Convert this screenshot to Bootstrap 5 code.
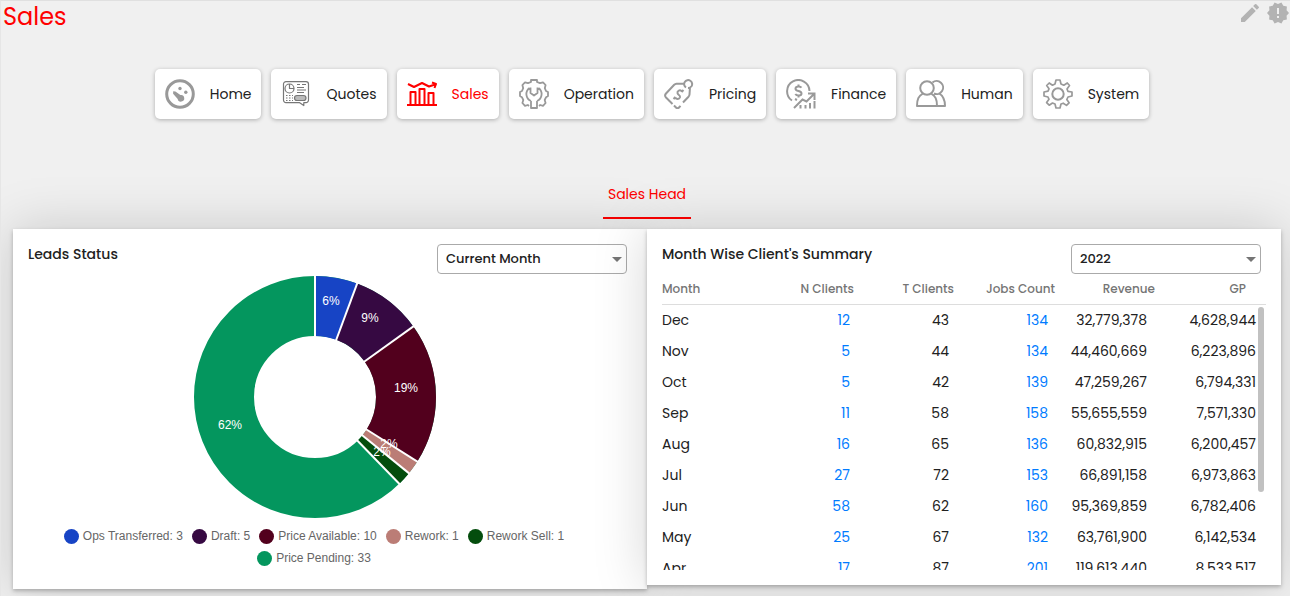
<!DOCTYPE html>
<html lang="en">
<head>
<meta charset="utf-8">
<meta name="viewport" content="width=device-width, initial-scale=1">
<title>Sales</title>
<link href="https://cdn.jsdelivr.net/npm/bootstrap@5.3.0/dist/css/bootstrap.min.css" rel="stylesheet">
<style>
body{background:#f0f0f0;color:#212121;font-family:Poppins,Inter,sans-serif;font-size:14px;line-height:20px;border-top:1px solid #e0e0e0;border-left:1px solid #e6e6e6}
h1{font-size:24px;line-height:32px;color:red;padding-left:2px}
.tool{border:0;background:none;padding:0;color:#b3b3b3;line-height:0}
.tool svg{width:24px;height:24px;fill:currentColor}
.main-nav{padding:36px 0 0 13px;gap:10px}
.tile{height:50px;padding:0 10px;gap:15px;border-radius:5px;background:#fff;color:#212121;box-shadow:0 1px 4px rgba(0,0,0,.28);text-decoration:none}
.tile svg{width:30px;height:30px;fill:none;stroke:#999;stroke-width:2;stroke-linejoin:round}
.tile .solid{fill:#999;stroke:none}
.tile.active{color:red}
.tile.active svg{stroke:red}
.sub-tabs{padding:51px 0 10px 3px}
.sub-tab{width:88px;height:49px;color:red;border-bottom:2px solid red;text-decoration:none}
.panels{padding:0 9px 7px 12px}
.panel{background:#fff;padding:15px 20px 15px 15px;box-shadow:0 2px 4px rgba(0,0,0,.25),0 0 50px rgba(0,0,0,.17)}
.panel h2{font-size:14px;line-height:20px;font-weight:500}
.pick{width:190px;height:30px;border:1px solid #aaa;border-radius:4px;padding:0 24px 0 8px;font-size:13px;font-weight:500;color:#212121;background-image:url("data:image/svg+xml,%3Csvg xmlns='http://www.w3.org/2000/svg' viewBox='0 0 10 5'%3E%3Cpath fill='%23757575' d='M0 0h10L5 5z'/%3E%3C/svg%3E");background-size:10px 5px;background-position:right 4px center}
.chart-box{padding:1px 25px 0 0}
.chart{width:244px;height:244px}
.chart circle{fill:none;stroke-width:60}
.chart line{stroke:#fff;stroke-width:2}
.chart text{fill:#fff;font:12px "Liberation Sans",Arial,sans-serif;text-anchor:middle}
.legend-list{font:12px/22px "Liberation Sans",Arial,sans-serif;color:#666;padding:6px 27px 0 0;column-gap:9px;margin-bottom:5px}
.legend-list svg{width:15px;height:15px;margin-right:4px}
.figures{display:block}
.figures thead,.figures tbody{display:block}
.figures tr{display:grid}
.figures th,.figures td{padding:0;text-align:right;white-space:nowrap}
.figures thead{border-bottom:1px solid #ddd;height:31px;padding-right:20px}
.figures thead tr{grid-template-columns:92fr 100fr 100fr 101fr 100fr 91fr;line-height:30px}
.figures thead th{font-weight:500;font-size:12px;color:#757575}
.figures tbody{height:265px;overflow-y:auto;scrollbar-width:none;padding-right:10px}
.figures tbody tr{grid-template-columns:89fr 99fr 99fr 99fr 99fr 109fr;line-height:31px}
.figures th:first-child{text-align:left}
.figures tbody th{font-weight:400}
.figures a{color:#007bff;text-decoration:none}
.figures tbody::-webkit-scrollbar{display:none}
.table-box{margin-right:-5px}
.thumb{top:33px;right:2px;width:6px;height:185px;border-radius:3px;background:#c1c1c1}
</style>
</head>
<body>
<header class="d-flex justify-content-between align-items-start">
  <h1 class="m-0 fw-normal">Sales</h1>
  <div class="d-flex gap-1">
    <button class="tool" type="button" aria-label="Edit"><svg viewBox="0 0 24 24"><path d="M3 17.25V21h3.75L17.81 9.94l-3.75-3.75L3 17.25zM20.71 7.04a1 1 0 0 0 0-1.41l-2.34-2.34a1 1 0 0 0-1.41 0l-1.83 1.83 3.75 3.75 1.83-1.83z"/></svg></button>
    <button class="tool" type="button" aria-label="New releases"><svg viewBox="0 0 24 24"><path d="M23 12l-2.44-2.78.34-3.68-3.61-.82-1.89-3.18L12 3 8.600 1.540 6.710 4.720l-3.610.810.340 3.680L1 12l2.440 2.780-.340 3.690 3.610.820 1.890 3.180L12 21l3.400 1.460 1.890-3.180 3.610-.820-.340-3.680L23 12zm-10 5h-2v-2h2v2zm0-4h-2V7h2v6z"/></svg></button>
  </div>
</header>

<nav class="main-nav d-flex flex-wrap justify-content-center" aria-label="Main">
  <a class="tile d-flex align-items-center" href="#"><svg viewBox="0 0 30 30"><circle cx="15" cy="15" r="13.300" stroke-width="3"/><g class="solid"><circle cx="15" cy="9.500" r="1.700"/><circle cx="20.800" cy="13.200" r="1.700"/><path d="M8.200 12.200l2.200.2 5 3.700a3.300 3.300 0 1 1-2.700 3.800l-4.600-5.200z"/></g></svg>Home</a>
  <a class="tile d-flex align-items-center" href="#"><svg viewBox="0 0 30 30"><g stroke="#777" stroke-width="1.200"><path d="M5 2.600h20a2.500 2.500 0 0 1 2.500 2.500v16a2.500 2.500 0 0 1-2.500 2.500h-2.200v3l-4.500-3H5a2.500 2.500 0 0 1-2.500-2.500v-16A2.500 2.500 0 0 1 5 2.600z"/><circle cx="8.500" cy="9.500" r="4.500"/><path d="M8.500 5v4.500H13"/><path d="M16 5.500h3m2 0h4M16 8.500h7M16 11h9M16 13.500h7"/><rect x="13.500" y="16.500" width="11.500" height="5" rx="2.500" fill="#bbb"/><path stroke-dasharray="1.500 1.500" d="M5 16.500h7M5 19h7M5 21.500h7"/></g></svg>Quotes</a>
  <a class="tile active d-flex align-items-center" href="#" aria-current="page"><svg viewBox="0 0 30 30"><path d="M0 26h30" stroke-width="2"/><path stroke-width="2" d="M3.500 26V13h5v13M12.500 26V10h5v16M21.500 26V14h5v12"/><path stroke-width="2" d="M1 5l6 3 8-4 7 3.500 6-2M25 3.500l4 1.500-1.500 4"/></svg>Sales</a>
  <a class="tile d-flex align-items-center" href="#"><svg viewBox="0 0 30 30"><path stroke-width="1.800" d="M10 27l-1.200-1-2.800.8L3.400 24l.9-3-1.400-2.800L1 17v-4l2-1 1.200-2.800L3.400 6 6 3.300l3 .9L12 3V1h6v2l3 1.200 3-.9L26.600 6l-.8 3.200L27 12l2 1v4l-1.900 1.200-1.400 2.800.9 3-2.600 2.800-2.800-.8-1.200 1"/><path stroke-width="1.800" d="M12 22V29h6V22M12 22a7.500 7.500 0 0 1-1.500-13M18 22a7.500 7.500 0 0 0 1.500-13M11.500 8.500V14l3.500 2.500 3.500-2.500V8.500"/></svg>Operation</a>
  <a class="tile d-flex align-items-center" href="#"><svg viewBox="0 0 30 30"><path d="M20.500 4.500l-8 .3a4 4 0 0 0-2.300 1L2 14.500a3 3 0 0 0 0 4L8.500 25M26 8l-.5 7.500a4 4 0 0 1-1 2.200L19 23.500M10 26.500l2 2a2 2 0 0 0 3 0l1.500-1.600M22 8.500a4 4 0 1 1 5.500-1.200A4 4 0 0 1 24 9"/><path d="M18 12.500c-2-2.500-5-.5-4.500 1.700.3 2 3 1.800 2.500 4-.8 2.500-4 2-4.500.2M9.500 20l2-2M17.500 13l2-2"/></svg>Pricing</a>
  <a class="tile d-flex align-items-center" href="#"><svg viewBox="0 0 30 30"><path d="M6 21.500A11.200 11.200 0 1 1 23.500 12M9 20l2 1"/><path d="M15.500 8.700c-1.500-2-6-1.500-6 1 0 3 6 1.600 6 4.700 0 2.600-4.700 2.800-6.200.6M12.500 5.500V8m0 8.500v2"/><path d="M8 29l8.500-8.500 4 2L28 15m-6-.5h6.500V21" stroke-linejoin="miter"/><path d="M14.500 26v3.500M19.500 26v3.500M24 24v5.500M28.500 22v7.500"/></svg>Finance</a>
  <a class="tile d-flex align-items-center" href="#"><svg viewBox="0 0 30 30"><circle cx="11" cy="9" r="6.800"/><path d="M7 14.500C2.500 17 1 20 1 27h20c0-7-1.500-10-6-12.500M16.500 3.500a6.500 6.500 0 1 1 1.500 11M22.500 14C27 16.500 29 20 29 27h-8"/></svg>Human</a>
  <a class="tile d-flex align-items-center" href="#"><svg viewBox="0 0 30 30"><path stroke-width="1.700" d="M13 1h4l1 4 2.800 1.200L24.300 4 26.500 6.500 24 10l1 2.300 4 .7v4l-4 1-1.200 2.500 2.300 3.300-2.600 2.600-3.300-2.200L18 25l-1 4h-4l-1-4-2.500-1-3.300 2.200-2.600-2.600L6 20.300 5 18l-4-1v-4l4-.8 1-2.400-2.300-3.300L6.200 4l3.300 2.200L12 5z"/><circle cx="15" cy="15" r="5.700"/></svg>System</a>
</nav>

<nav class="sub-tabs d-flex justify-content-center" aria-label="Sales views">
  <a class="sub-tab d-flex align-items-center justify-content-center" href="#" aria-current="page">Sales Head</a>
</nav>

<main class="panels">
  <div class="row g-0 align-items-start">
    <section class="col-lg-6 panel">
      <div class="d-flex justify-content-between">
        <h2 class="m-0">Leads Status</h2>
        <select class="form-select pick" aria-label="Period"><option>Current Month</option></select>
      </div>
      <div class="chart-box d-flex justify-content-center">
        <svg class="chart" viewBox="-122 -122 244 244" role="img" aria-label="Leads by status">
          <g transform="rotate(90)">
            <circle r="91" stroke="#04965e"/>
            <circle r="91" pathLength="53" stroke="#1744c5" stroke-dasharray="3 50" stroke-dashoffset="-26.500"/>
            <circle r="91" pathLength="53" stroke="#360942" stroke-dasharray="5 48" stroke-dashoffset="-29.500"/>
            <circle r="91" pathLength="53" stroke="#52001d" stroke-dasharray="10 43" stroke-dashoffset="-34.500"/>
            <circle r="91" pathLength="53" stroke="#bb7d76" stroke-dasharray="1 52" stroke-dashoffset="-44.500"/>
            <circle r="91" pathLength="53" stroke="#044d0d" stroke-dasharray="1 52" stroke-dashoffset="-45.500"/>
          </g>
          <line y1="-60" y2="-122"/>
          <line y1="-60" y2="-122" transform="rotate(20.380)"/>
          <line y1="-60" y2="-122" transform="rotate(54.340)"/>
          <line y1="-60" y2="-122" transform="rotate(122.260)"/>
          <line y1="-60" y2="-122" transform="rotate(129.060)"/>
          <line y1="-60" y2="-122" transform="rotate(135.850)"/>
          <text x="16" y="-92">6%</text><text x="55" y="-75">9%</text><text x="91" y="-5">19%</text>
          <text x="74" y="51">2%</text><text x="67" y="59">2%</text><text x="-85" y="32">62%</text>
        </svg>
      </div>
      <ul class="legend-list list-unstyled d-flex flex-wrap justify-content-center">
        <li class="d-flex align-items-center"><svg viewBox="0 0 15 15"><circle cx="7.500" cy="7.500" r="7.500" fill="#1744c5"/></svg>Ops Transferred: 3</li>
        <li class="d-flex align-items-center"><svg viewBox="0 0 15 15"><circle cx="7.500" cy="7.500" r="7.500" fill="#360942"/></svg>Draft: 5</li>
        <li class="d-flex align-items-center"><svg viewBox="0 0 15 15"><circle cx="7.500" cy="7.500" r="7.500" fill="#52001d"/></svg>Price Available: 10</li>
        <li class="d-flex align-items-center"><svg viewBox="0 0 15 15"><circle cx="7.500" cy="7.500" r="7.500" fill="#bb7d76"/></svg>Rework: 1</li>
        <li class="d-flex align-items-center"><svg viewBox="0 0 15 15"><circle cx="7.500" cy="7.500" r="7.500" fill="#044d0d"/></svg>Rework Sell: 1</li>
        <li class="d-flex align-items-center"><svg viewBox="0 0 15 15"><circle cx="7.500" cy="7.500" r="7.500" fill="#04965e"/></svg>Price Pending: 33</li>
      </ul>
    </section>
    <section class="col-lg-6 panel">
      <div class="d-flex justify-content-between">
        <h2 class="m-0">Month Wise Client's Summary</h2>
        <select class="form-select pick" aria-label="Year"><option>2022</option></select>
      </div>
      <div class="table-box position-relative">
      <table class="figures">
        <thead><tr><th>Month</th><th>N Clients</th><th>T Clients</th><th>Jobs Count</th><th>Revenue</th><th>GP</th></tr></thead>
        <tbody>
          <tr><th>Dec</th><td><a href="#">12</a></td><td>43</td><td><a href="#">134</a></td><td>32,779,378</td><td>4,628,944</td></tr>
          <tr><th>Nov</th><td><a href="#">5</a></td><td>44</td><td><a href="#">134</a></td><td>44,460,669</td><td>6,223,896</td></tr>
          <tr><th>Oct</th><td><a href="#">5</a></td><td>42</td><td><a href="#">139</a></td><td>47,259,267</td><td>6,794,331</td></tr>
          <tr><th>Sep</th><td><a href="#">11</a></td><td>58</td><td><a href="#">158</a></td><td>55,655,559</td><td>7,571,330</td></tr>
          <tr><th>Aug</th><td><a href="#">16</a></td><td>65</td><td><a href="#">136</a></td><td>60,832,915</td><td>6,200,457</td></tr>
          <tr><th>Jul</th><td><a href="#">27</a></td><td>72</td><td><a href="#">153</a></td><td>66,891,158</td><td>6,973,863</td></tr>
          <tr><th>Jun</th><td><a href="#">58</a></td><td>62</td><td><a href="#">160</a></td><td>95,369,859</td><td>6,782,406</td></tr>
          <tr><th>May</th><td><a href="#">25</a></td><td>67</td><td><a href="#">132</a></td><td>63,761,900</td><td>6,142,534</td></tr>
          <tr><th>Apr</th><td><a href="#">17</a></td><td>87</td><td><a href="#">201</a></td><td>119,613,440</td><td>8,533,517</td></tr>
        </tbody>
      </table>
      <div class="thumb position-absolute"></div>
      </div>
    </section>
  </div>
</main>
<script src="https://cdn.jsdelivr.net/npm/bootstrap@5.3.0/dist/js/bootstrap.bundle.min.js"></script>
</body>
</html>
